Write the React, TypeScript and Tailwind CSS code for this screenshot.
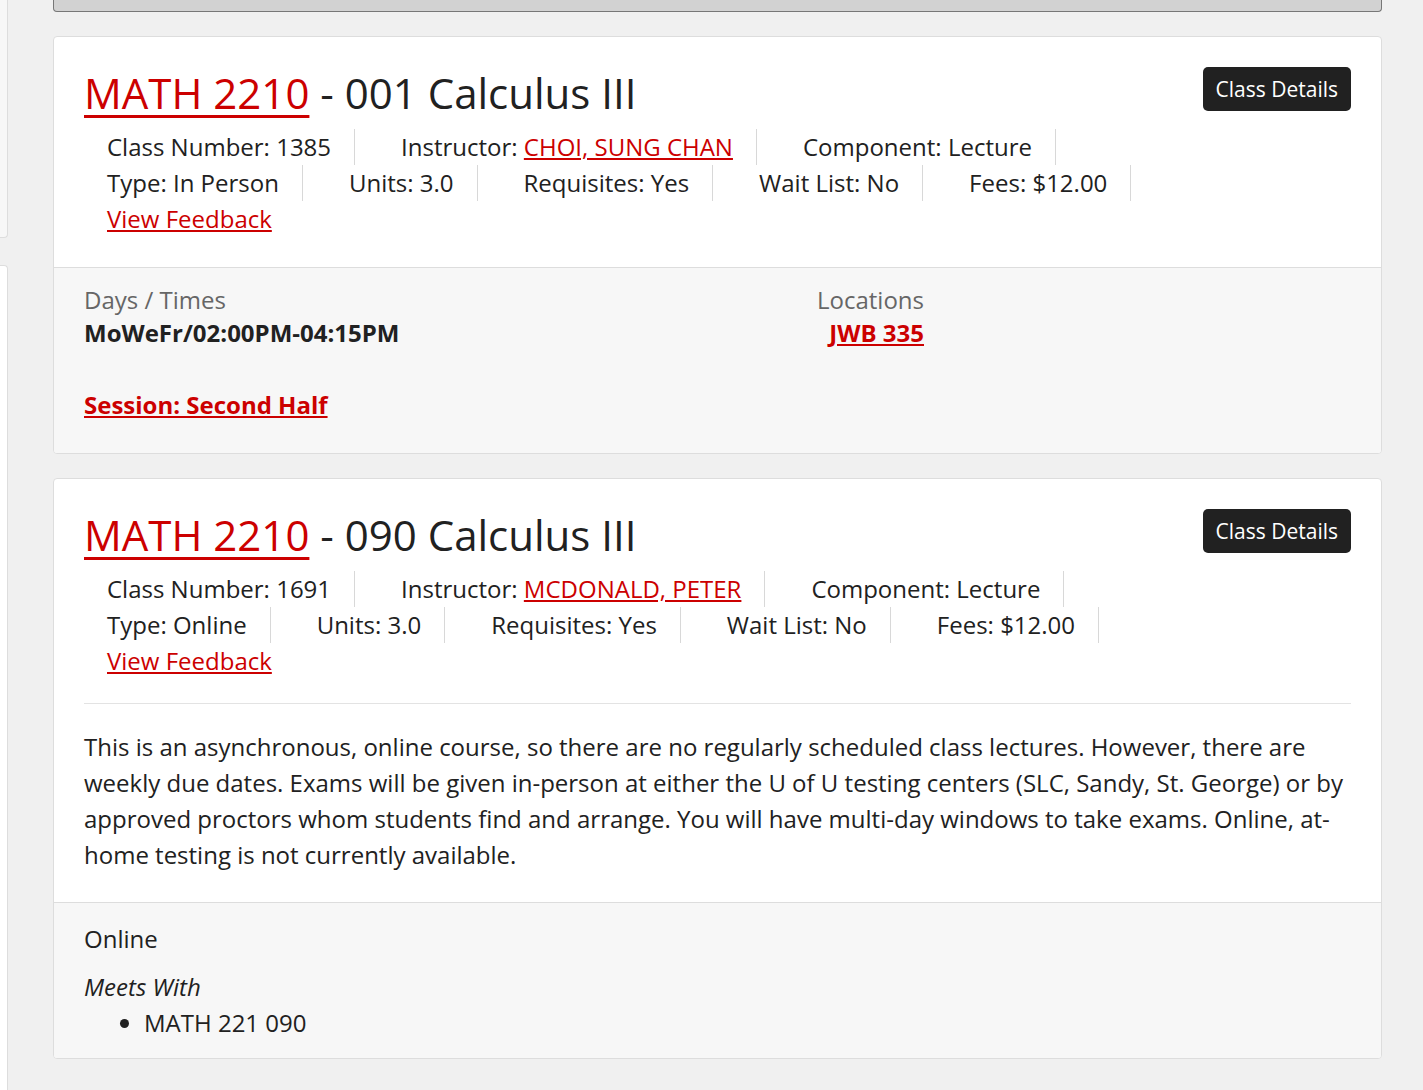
import React from 'react'

const RED = 'text-[#cc0000] underline'

type Item = { label: string; value: string; link?: boolean }

const sections = [
  {
    id: '001',
    number: 'MATH 2210',
    title: '001 Calculus III',
    rows: [
      [
        { label: 'Class Number', value: '1385' },
        { label: 'Instructor', value: 'CHOI, SUNG CHAN', link: true },
        { label: 'Component', value: 'Lecture' },
      ],
      [
        { label: 'Type', value: 'In Person' },
        { label: 'Units', value: '3.0' },
        { label: 'Requisites', value: 'Yes' },
        { label: 'Wait List', value: 'No' },
        { label: 'Fees', value: '$12.00' },
      ],
    ] as Item[][],
  },
  {
    id: '090',
    number: 'MATH 2210',
    title: '090 Calculus III',
    rows: [
      [
        { label: 'Class Number', value: '1691' },
        { label: 'Instructor', value: 'MCDONALD, PETER', link: true },
        { label: 'Component', value: 'Lecture' },
      ],
      [
        { label: 'Type', value: 'Online' },
        { label: 'Units', value: '3.0' },
        { label: 'Requisites', value: 'Yes' },
        { label: 'Wait List', value: 'No' },
        { label: 'Fees', value: '$12.00' },
      ],
    ] as Item[][],
  },
]

function CardHeader({ section }: { section: typeof sections[0] }) {
  return (
    <>
      <div className="flex items-start justify-between">
        <h2 className="text-[42px] leading-[52px] text-[#212121] font-normal">
          <a href="#" className={`${RED} decoration-[3px] underline-offset-[6px]`}>{section.number}</a>
          {' - '}{section.title}
        </h2>
        <button className="h-[44px] px-[13px] rounded-[5px] bg-[#212121] text-white text-[21px] leading-none">
          Class Details
        </button>
      </div>
      <div className="mt-[10px] text-[24px] leading-[36px]">
        {section.rows.map((row, i) => (
          <div key={i} className="flex gap-[23px]">
            {row.map((item) => (
              <div key={item.label} className="h-[36px] px-[23px] border-r border-[#d8d8d8]">
                {item.label}:{' '}
                {item.link ? <a href="#" className={RED}>{item.value}</a> : item.value}
              </div>
            ))}
          </div>
        ))}
        <div className="px-[23px]">
          <a href="#" className={RED}>View Feedback</a>
        </div>
      </div>
    </>
  )
}

export default function App() {
  return (
    <div
      className="min-h-screen bg-[#f0f0f0] flex text-[#212121]"
      style={{ fontFamily: '"Open Sans", "Liberation Sans", sans-serif' }}
    >
      {/* left sidebar edge */}
      <div className="w-[8px] shrink-0 flex flex-col">
        <div className="h-[238px] bg-[#f7f7f7] border-r border-b border-[#dddddd] rounded-br-[4px]" />
        <div className="mt-[27px] flex-1 bg-white border-r border-t border-[#dddddd] rounded-tr-[4px]" />
      </div>

      <div className="ml-[45px] w-[1329px]">
        <div className="h-[12px] bg-[#d2d2d2] border border-t-0 border-[#777] rounded-b-[4px]" />

        {/* card 1 */}
        <div className="mt-[24px] bg-white border border-[#dddddd] rounded-[4px] overflow-hidden">
          <div className="px-[30px] pt-[30px] pb-[30px]">
            <CardHeader section={sections[0]} />
          </div>
          <div className="bg-[#f7f7f7] border-t border-[#dddddd] px-[30px] pt-[16px] pb-[32px] text-[24px] leading-[32px]">
            <div className="w-[840px] flex justify-between">
              <div>
                <div className="text-[#666]">Days / Times</div>
                <div className="mt-[1px] font-bold">MoWeFr/02:00PM-04:15PM</div>
              </div>
              <div className="text-right">
                <div className="text-[#666]">Locations</div>
                <a href="#" className={`mt-[1px] inline-block ${RED} font-bold`}>JWB 335</a>
              </div>
            </div>
            <div className="mt-[40px]">
              <a href="#" className={`${RED} font-bold`}>Session: Second Half</a>
            </div>
          </div>
        </div>

        {/* card 2 */}
        <div className="mt-[24px] bg-white border border-[#dddddd] rounded-[4px] overflow-hidden">
          <div className="px-[30px] pt-[30px] pb-[29px]">
            <CardHeader section={sections[1]} />
            <hr className="mt-[24px] border-0 border-t border-[#e3e3e3]" />
            <p className="mt-[25px] text-[24px] leading-[36px]">
              This is an asynchronous, online course, so there are no regularly scheduled class lectures. However, there are
              weekly due dates. Exams will be given in-person at either the U of U testing centers (SLC, Sandy, St. George) or by
              approved proctors whom students find and arrange. You will have multi-day windows to take exams. Online, at-home
              testing is not currently available.
            </p>
          </div>
          <div className="bg-[#f7f7f7] border-t border-[#dddddd] px-[30px] pt-[18px] pb-[17px] text-[24px] leading-[36px]">
            <div>Online</div>
            <div className="mt-[12px] italic">Meets With</div>
            <ul className="list-disc pl-[60px]">
              <li>MATH 221 090</li>
            </ul>
          </div>
        </div>
      </div>
    </div>
  )
}
